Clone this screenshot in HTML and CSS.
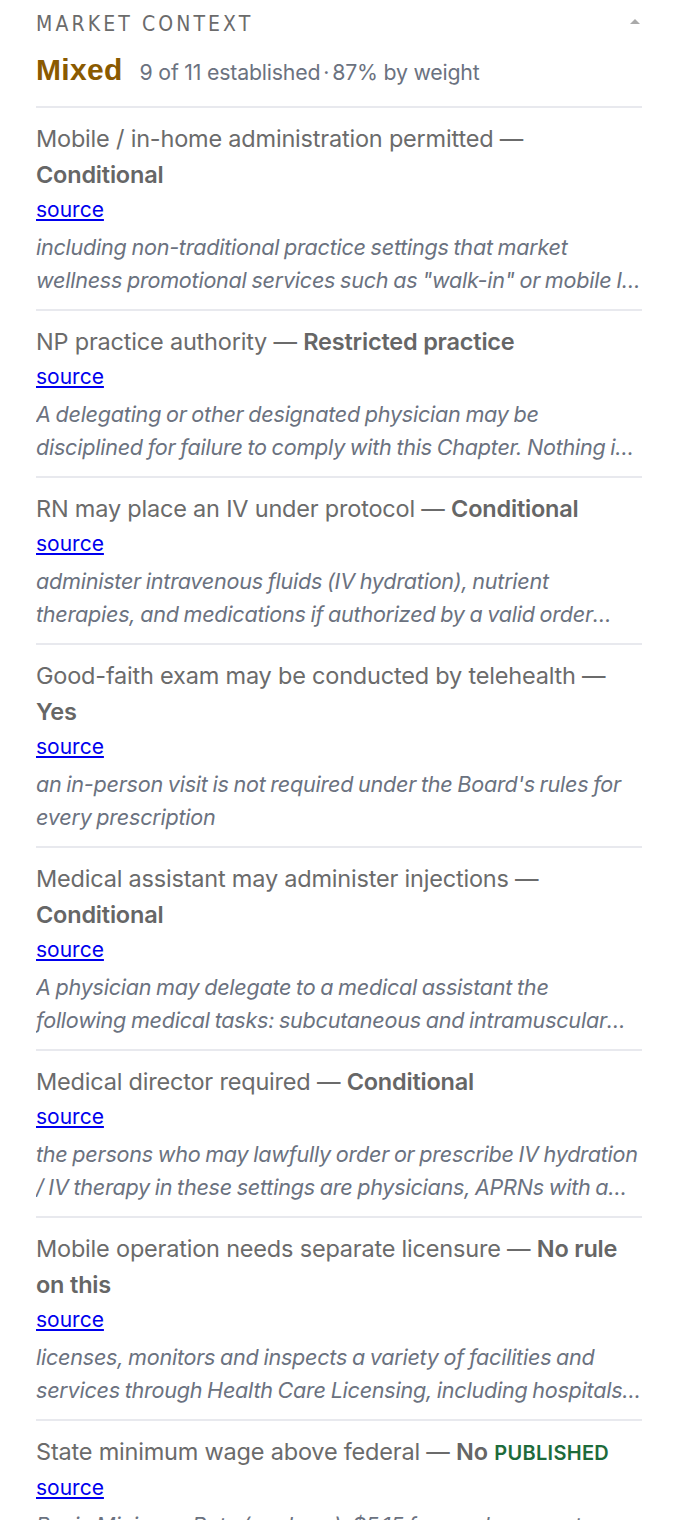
FILE: index.html
```html
<!DOCTYPE html>
<html>
<head>
<meta charset="utf-8">
<link rel="stylesheet" href="styles.css">
</head>
<body>
<section class="panel">
  <header class="head">
    <h2 class="label">MARKET CONTEXT</h2>
    <span class="caret"></span>
  </header>
  <div class="summary">
    <span class="verdict">Mixed</span>
    <span class="meta">9 of 11 established<span class="dot">·</span>87% by weight</span>
  </div>
  <ul class="list">
    <li class="item">
      <div class="title">Mobile / in-home administration permitted — <b>Conditional</b></div>
      <a class="src" href="#">source</a>
      <p class="quote">including non-traditional practice settings that market wellness promotional services such as "walk-in" or mobile IV therapy clinics and spas</p>
    </li>
    <li class="item">
      <div class="title">NP practice authority — <b>Restricted practice</b></div>
      <a class="src" href="#">source</a>
      <p class="quote">A delegating or other designated physician may be disciplined for failure to comply with this Chapter. Nothing in this Chapter shall be construed</p>
    </li>
    <li class="item">
      <div class="title">RN may place an IV under protocol — <b>Conditional</b></div>
      <a class="src" href="#">source</a>
      <p class="quote">administer intravenous fluids (IV hydration), nutrient therapies, and medications if authorized by a valid order from a licensed prescriber</p>
    </li>
    <li class="item">
      <div class="title">Good-faith exam may be conducted by telehealth — <b>Yes</b></div>
      <a class="src" href="#">source</a>
      <p class="quote">an in-person visit is not required under the Board's rules for every prescription</p>
    </li>
    <li class="item">
      <div class="title">Medical assistant may administer injections — <b>Conditional</b></div>
      <a class="src" href="#">source</a>
      <p class="quote">A physician may delegate to a medical assistant the following medical tasks: subcutaneous and intramuscular injections under direct supervision</p>
    </li>
    <li class="item">
      <div class="title">Medical director required — <b>Conditional</b></div>
      <a class="src" href="#">source</a>
      <p class="quote">the persons who may lawfully order or prescribe IV hydration / IV therapy in these settings are physicians, APRNs with a collaborative agreement</p>
    </li>
    <li class="item">
      <div class="title">Mobile operation needs separate licensure — <b>No rule on this</b></div>
      <a class="src" href="#">source</a>
      <p class="quote">licenses, monitors and inspects a variety of facilities and services through Health Care Licensing, including hospitals and clinics</p>
    </li>
    <li class="item">
      <div class="title">State minimum wage above federal — <b>No</b> <span class="tag">PUBLISHED</span></div>
      <a class="src" href="#">source</a>
      <p class="quote">Basic Minimum Rate (per hour): $5.15 for employers not covered by the federal law</p>
    </li>
  </ul>
</section>
</body>
</html>
```

FILE: styles.css
```css
* { box-sizing: border-box; }
html, body { margin: 0; padding: 0; background: #fff; }
body {
  font-family: Inter, "Noto Sans", sans-serif;
  color: #6b6b6b;
}
.panel {
  padding: 8px 36px 0 36px;
}
.head {
  display: flex;
  align-items: center;
  justify-content: space-between;
  height: 32px;
}
.label {
  margin: 0;
  font-family: "Liberation Sans Narrow", "DejaVu Sans Condensed", "Liberation Sans", sans-serif;
  font-stretch: condensed;
  font-weight: 400;
  font-size: 21px;
  letter-spacing: 3.1px;
  color: #6b6b6b;
}
.caret {
  width: 0;
  height: 0;
  border-left: 5px solid transparent;
  border-right: 5px solid transparent;
  border-bottom: 5px solid #aaaaaa;
  margin-right: 2px;
  margin-top: -6px;
}
.summary {
  display: flex;
  align-items: baseline;
  gap: 17px;
  padding: 13px 0 19px;
  border-bottom: 2px solid #e8e9ee;
}
.verdict {
  font-family: "Liberation Sans", sans-serif;
  font-weight: 700;
  font-size: 30px;
  letter-spacing: 0.3px;
  color: #8a5a00;
}
.meta {
  font-size: 21.3px;
  color: #6b7280;
  letter-spacing: -0.2px;
}
.dot { margin: 0 3px; }
.list {
  list-style: none;
  margin: 0;
  padding: 0;
}
.item {
  padding: 13px 0 12px;
  border-bottom: 2px solid #e8e9ee;
}
.title {
  font-size: 23.5px;
  line-height: 36px;
  letter-spacing: -0.2px;
}
.title b {
  font-weight: 600;
  color: #666;
}
.tag {
  font-size: 20px;
  font-weight: 600;
  color: #1d6b3a;
  letter-spacing: 0.3px;
}
.src {
  display: inline-block;
  font-size: 21px;
  line-height: 34px;
  color: #0000ee;
  text-decoration: underline;
}
.quote {
  margin: 4px 0 0;
  font-size: 21.6px;
  line-height: 33px;
  font-style: italic;
  color: #6b7280;
  letter-spacing: -0.25px;
  word-spacing: -1px;
  display: -webkit-box;
  -webkit-box-orient: vertical;
  -webkit-line-clamp: 2;
  overflow: hidden;
}
```
